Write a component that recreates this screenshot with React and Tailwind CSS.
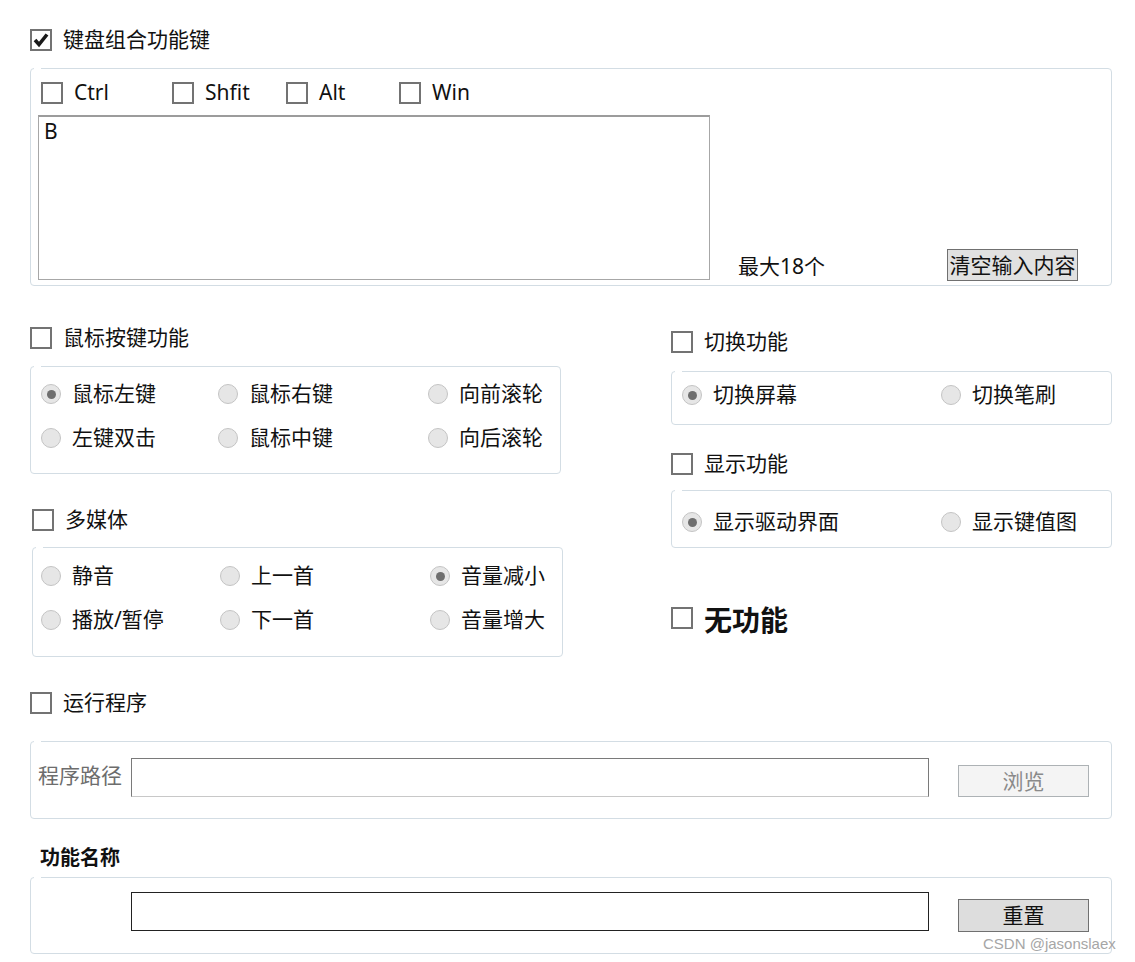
import React from 'react';

const font = { fontFamily: '"Noto Sans", "Noto Sans CJK SC", sans-serif' };

function CheckBox({ checked }) {
  return (
    <span className="w-[22px] h-[22px] shrink-0 border-2 border-[#737373] bg-white flex items-center justify-center">
      {checked && (
        <svg width="16" height="16" viewBox="0 0 16 16">
          <path d="M2 8 L6 12.5 L14 2.5" fill="none" stroke="#1a1a1a" strokeWidth="3.6" />
        </svg>
      )}
    </span>
  );
}

function CheckRow({ label, checked, className = '', textClass = 'text-[21px]' }) {
  return (
    <div className={'flex items-center h-[22px] ' + className}>
      <CheckBox checked={checked} />
      <span className={'ml-[11px] -mt-[2px] leading-none text-[#111] whitespace-nowrap ' + textClass}>{label}</span>
    </div>
  );
}

function Radio({ label, checked, width }) {
  return (
    <div className="flex items-center h-[22px]" style={{ width }}>
      <span className="w-[20px] h-[20px] shrink-0 rounded-full border-[1.5px] border-[#c4c4c4] bg-[#e6e6e6] flex items-center justify-center">
        {checked && <span className="w-[9px] h-[9px] rounded-full bg-[#6e6e6e]" />}
      </span>
      <span className="ml-[11px] -mt-[1px] text-[21px] leading-none text-[#111] whitespace-nowrap">{label}</span>
    </div>
  );
}

function Group({ className = '', children }) {
  return (
    <div className={'relative border border-[#d3dde4] rounded-[4px] bg-white ' + className}>
      <span className="absolute left-[3px] -top-px w-[7px] h-px bg-white" />
      {children}
    </div>
  );
}

export default function App() {
  return (
    <div className="relative w-[1135px] h-[962px] bg-white overflow-hidden pt-[29px]" style={font}>
      {/* 键盘组合 */}
      <CheckRow label="键盘组合功能键" checked className="ml-[30px]" />
      <Group className="ml-[30px] mt-[17px] w-[1082px] h-[218px] pt-[13px]">
        <div className="flex pl-[10px]">
          <div className="w-[131px]"><CheckRow label="Ctrl" /></div>
          <div className="w-[114px]"><CheckRow label="Shfit" /></div>
          <div className="w-[113px]"><CheckRow label="Alt" /></div>
          <div><CheckRow label="Win" /></div>
        </div>
        <div className="flex items-end mt-[11px] pl-[7px]">
          <div className="w-[672px] h-[165px] border border-[#a7a7a7] border-t-2 border-t-[#9c9c9c] px-[5px] pt-[1px] text-[21px] leading-[26px] text-[#111]">
            B
          </div>
          <span className="ml-[28px] mb-[3px] text-[21px] leading-none text-[#111]">最大18个</span>
          <button className="ml-[122px] -mb-[1px] w-[131px] h-[32px] bg-[#e1e1e1] border border-[#707070] text-[21px] leading-none text-[#111] flex items-center justify-center">
            清空输入内容
          </button>
        </div>
      </Group>

      {/* 中间两列 */}
      <div className="flex mt-[41px]">
        <div className="ml-[30px] w-[533px]">
          <CheckRow label="鼠标按键功能" />
          <Group className="mt-[17px] w-[531px] h-[108px] pt-[16px] pl-[10px]">
            <div className="flex">
              <Radio label="鼠标左键" checked width={177} />
              <Radio label="鼠标右键" width={210} />
              <Radio label="向前滚轮" />
            </div>
            <div className="flex mt-[22px]">
              <Radio label="左键双击" width={177} />
              <Radio label="鼠标中键" width={210} />
              <Radio label="向后滚轮" />
            </div>
          </Group>
          <CheckRow label="多媒体" className="mt-[35px] ml-[2px]" />
          <Group className="mt-[16px] ml-[2px] w-[531px] h-[110px] pt-[17px] pl-[8px]">
            <div className="flex">
              <Radio label="静音" width={179} />
              <Radio label="上一首" width={210} />
              <Radio label="音量减小" checked />
            </div>
            <div className="flex mt-[22px]">
              <Radio label="播放/暂停" width={179} />
              <Radio label="下一首" width={210} />
              <Radio label="音量增大" />
            </div>
          </Group>
        </div>

        <div className="ml-[108px] w-[441px] pt-[4px]">
          <CheckRow label="切换功能" />
          <Group className="mt-[18px] w-[441px] h-[54px] pt-[12px] pl-[10px]">
            <div className="flex">
              <Radio label="切换屏幕" checked width={259} />
              <Radio label="切换笔刷" />
            </div>
          </Group>
          <CheckRow label="显示功能" className="mt-[28px]" />
          <Group className="mt-[15px] w-[441px] h-[58px] pt-[20px] pl-[10px]">
            <div className="flex">
              <Radio label="显示驱动界面" checked width={259} />
              <Radio label="显示键值图" />
            </div>
          </Group>
          <CheckRow label="无功能" className="mt-[59px]" textClass="text-[28px] font-bold mt-[4px]" />
        </div>
      </div>

      {/* 运行程序 */}
      <CheckRow label="运行程序" className="ml-[30px] mt-[35px]" />
      <Group className="ml-[30px] mt-[27px] w-[1082px] h-[78px] flex items-start pt-[16px]">
        <span className="ml-[7px] mt-[7px] text-[21px] leading-none text-[#6d6d6d] w-[93px]">程序路径</span>
        <div className="w-[798px] h-[39px] border border-[#7a7a7a] border-b-[#c8c8c8] bg-white" />
        <button className="ml-[29px] mt-[7px] w-[131px] h-[32px] bg-[#f4f4f4] border border-[#adb2b5] text-[21px] leading-none text-[#8a8a8a] flex items-center justify-center">
          浏览
        </button>
      </Group>

      {/* 功能名称 */}
      <div className="ml-[40px] mt-[28px] h-[22px] flex items-center text-[20px] font-bold leading-none text-[#111]">功能名称</div>
      <Group className="ml-[30px] mt-[8px] w-[1082px] h-[77px] flex items-start pt-[14px]">
        <div className="ml-[100px] w-[798px] h-[39px] border border-[#222] bg-white" />
        <button className="ml-[29px] mt-[7px] w-[131px] h-[33px] bg-[#dddddd] border border-[#707070] text-[21px] leading-none text-[#111] flex items-center justify-center">
          重置
        </button>
      </Group>

      <span
        className="absolute left-[983px] top-[936px] text-[15px] leading-none text-[#a6a6a6] whitespace-nowrap"
        style={{ fontFamily: '"Liberation Sans", Arial, sans-serif' }}
      >
        CSDN @jasonslaex
      </span>
    </div>
  );
}
